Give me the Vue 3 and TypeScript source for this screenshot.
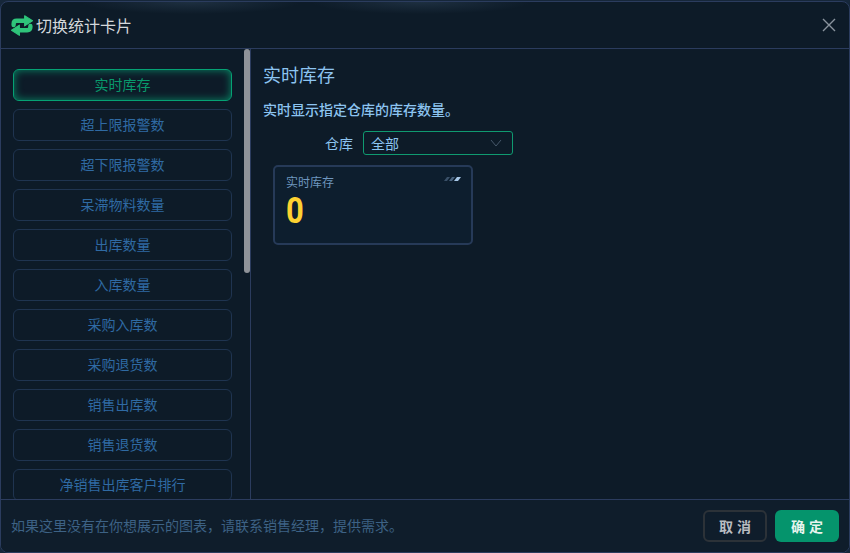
<template>
  <div class="dialog">
    <div class="dialog-header">
      <svg class="switch-icon" viewBox="0 0 21 20" width="22" height="21">
        <!-- 上下两个反向箭头 -->
        <path d="M2.500 9.500V8.500C2.500 6.500 3.800 5.500 5.500 5.500H14" stroke="#2fc47a" stroke-width="4.200" stroke-linecap="round" fill="none" />
        <path d="M13 0.600 20.500 5.500 13 10.400Z" fill="#2fc47a" stroke="#2fc47a" stroke-width="1" stroke-linejoin="round" />
        <path d="M18.500 10.500V11.500C18.500 13.500 17.200 14.500 15.500 14.500H7" stroke="#2fc47a" stroke-width="4.200" stroke-linecap="round" fill="none" />
        <path d="M8 9.600 0.500 14.500 8 19.400Z" fill="#2fc47a" stroke="#2fc47a" stroke-width="1" stroke-linejoin="round" />
      </svg>
      <span class="dialog-title">切换统计卡片</span>
      <button class="close-btn" aria-label="关闭">
        <svg viewBox="0 0 14 14" width="14" height="14">
          <path d="M1 1 13 13M13 1 1 13" stroke="#8a949e" stroke-width="1.400" fill="none" />
        </svg>
      </button>
    </div>

    <div class="dialog-body">
      <div class="side">
        <div class="side-list">
          <div v-for="(item, i) in cards" :key="item" class="side-item" :class="{ active: i === 0 }">
            {{ item }}
          </div>
        </div>
        <div class="scroll-thumb"></div>
      </div>

      <div class="main">
        <h3 class="card-name">实时库存</h3>
        <p class="card-desc">实时显示指定仓库的库存数量。</p>
        <div class="form-row">
          <label class="form-label">仓库</label>
          <div class="select">
            <span>全部</span>
            <svg viewBox="0 0 12 8" width="12" height="8">
              <path d="M1 1 6 7 11 1" stroke="#46586a" stroke-width="1" fill="none" />
            </svg>
          </div>
        </div>
        <div class="preview">
          <div class="preview-top">
            <span class="preview-title">实时库存</span>
            <svg class="stripes" viewBox="0 0 18 5" width="18" height="5">
              <path d="M1 5 4 1H7L4 5Z" fill="#3a5068" />
              <path d="M6 5 9 1H12L9 5Z" fill="#4a6480" />
              <path d="M11 5 14 1H18L15 5Z" fill="#a8c8e8" />
            </svg>
          </div>
          <div class="preview-value">0</div>
        </div>
      </div>
    </div>

    <div class="dialog-footer">
      <span class="tip">如果这里没有在你想展示的图表，请联系销售经理，提供需求。</span>
      <div class="footer-btns">
        <button class="btn cancel">取 消</button>
        <button class="btn ok">确 定</button>
      </div>
    </div>
  </div>
</template>

<script setup lang="ts">
const cards: string[] = [
  "实时库存",
  "超上限报警数",
  "超下限报警数",
  "呆滞物料数量",
  "出库数量",
  "入库数量",
  "采购入库数",
  "采购退货数",
  "销售出库数",
  "销售退货数",
  "净销售出库客户排行",
];
</script>

<style>
html,
body {
  margin: 0;
  background: #16273a;
  overflow: hidden;
}
</style>

<style scoped>
.dialog {
  box-sizing: border-box;
  width: 850px;
  height: 552px;
  margin-top: 1px;
  display: flex;
  flex-direction: column;
  background: #0d1b28;
  border: 1px solid #2b3c5e;
  border-radius: 8px;
  overflow: hidden;
  font-family: "Liberation Sans", "Noto Sans CJK SC", sans-serif;
}

.dialog-header {
  flex: none;
  height: 46px;
  display: flex;
  align-items: center;
  padding: 0 13px 0 10px;
  border-bottom: 1px solid #2b3c5e;
  background:
    radial-gradient(110px 12px at 190px 0, rgba(60, 85, 110, 0.35), transparent),
    radial-gradient(110px 12px at 420px 0, rgba(60, 85, 110, 0.35), transparent);
}

.switch-icon {
  flex: none;
  margin-right: 3px;
}

.dialog-title {
  flex: 1;
  font-size: 16px;
  color: #d4d8dc;
}

.close-btn {
  padding: 0;
  border: none;
  background: transparent;
  display: flex;
}

.dialog-body {
  flex: 1;
  min-height: 0;
  display: flex;
}

.side {
  flex: none;
  width: 249px;
  position: relative;
  overflow: hidden;
  border-right: 1px solid #2b3c5e;
}

.side-list {
  display: flex;
  flex-direction: column;
  gap: 8px;
  padding: 20px 0 0 12px;
  width: 219px;
}

.side-item {
  flex: none;
  box-sizing: border-box;
  height: 32px;
  line-height: 30px;
  text-align: center;
  font-size: 14px;
  color: #2f6aa3;
  border: 1px solid #1f3450;
  border-radius: 6px;
}

.side-item.active {
  color: #089a6c;
  border-color: #05a274;
  box-shadow: inset 0 0 9px rgba(5, 170, 120, 0.75);
}

.scroll-thumb {
  position: absolute;
  top: 0;
  right: 0;
  width: 6px;
  height: 224px;
  border-radius: 3px;
  background: #8f9399;
}

.main {
  flex: 1;
  padding: 15px 12px;
}

.card-name {
  margin: 0;
  font-size: 18px;
  line-height: 24px;
  font-weight: 400;
  color: #8cc4f0;
}

.card-desc {
  margin: 12px 0 0;
  font-size: 14px;
  line-height: 20px;
  font-weight: 500;
  color: #8cc4f0;
}

.form-row {
  display: flex;
  align-items: center;
  margin-top: 11px;
}

.form-label {
  width: 100px;
  padding-right: 10px;
  box-sizing: border-box;
  text-align: right;
  font-size: 14px;
  color: #8cc4f0;
}

.select {
  box-sizing: border-box;
  width: 150px;
  height: 24px;
  display: flex;
  align-items: center;
  justify-content: space-between;
  padding: 0 10px 0 7px;
  border: 1px solid #0f9a70;
  border-radius: 3px;
  font-size: 14px;
  color: #8cc4f0;
}

.preview {
  box-sizing: border-box;
  width: 200px;
  height: 80px;
  margin: 10px 0 0 10px;
  padding: 9px 10px 0 11px;
  border: 2px solid #263a58;
  border-radius: 5px;
  background: #0d1e2e;
}

.preview-top {
  display: flex;
  justify-content: space-between;
  align-items: flex-start;
}

.preview-title {
  font-size: 12px;
  line-height: 14px;
  color: #6f97bf;
}

.preview-value {
  margin-top: 3px;
  font-size: 36px;
  line-height: 36px;
  font-weight: 700;
  color: #fdd231;
  font-family: "Roboto", "Liberation Sans", sans-serif;
  transform: scaleX(0.86);
  transform-origin: left center;
}

.dialog-footer {
  flex: none;
  height: 53px;
  box-sizing: border-box;
  display: flex;
  align-items: center;
  justify-content: space-between;
  padding: 0 10px;
  border-top: 1px solid #2b3c5e;
  background: #0f1d2b;
}

.tip {
  font-size: 14px;
  padding-bottom: 3px;
  color: #3d6285;
}

.footer-btns {
  display: flex;
  gap: 8px;
}

.btn {
  box-sizing: border-box;
  width: 64px;
  height: 32px;
  border-radius: 6px;
  font-family: inherit;
  font-size: 14px;
  font-weight: 700;
  padding: 0;
}

.cancel {
  color: #b8bcc0;
  background: transparent;
  border: 2px solid #2c3238;
}

.ok {
  color: #e8f4ee;
  background: #05946c;
  border: none;
}
</style>
